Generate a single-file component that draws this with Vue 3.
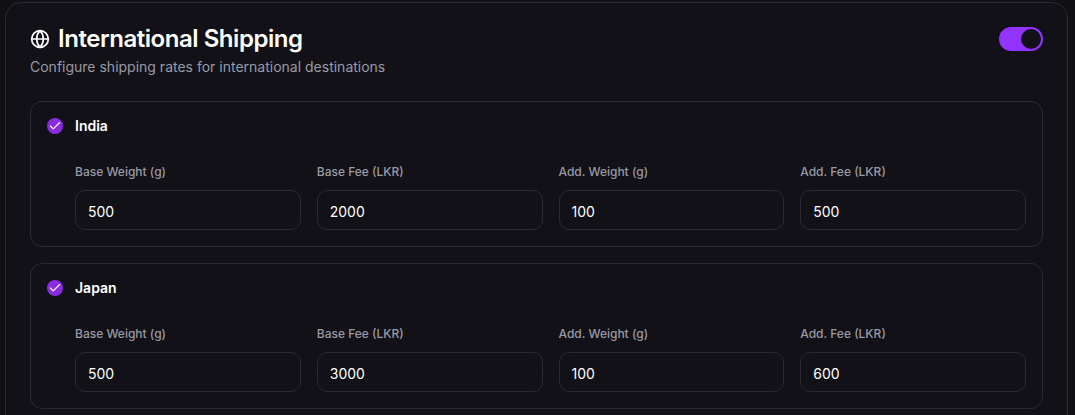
<script setup>
const fieldLabels = ['Base Weight (g)', 'Base Fee (LKR)', 'Add. Weight (g)', 'Add. Fee (LKR)']
const countries = [
  { name: 'India', values: ['500', '2000', '100', '500'] },
  { name: 'Japan', values: ['500', '3000', '100', '600'] },
]
</script>

<template>
  <div class="page">
    <section class="card">
      <header class="head">
        <div>
          <div class="title-row">
            <svg class="globe" viewBox="0 0 24 24" fill="none" stroke="currentColor" stroke-width="2" stroke-linecap="round" stroke-linejoin="round">
              <circle cx="12" cy="12" r="10" />
              <path d="M12 2a14.5 14.5 0 0 0 0 20 14.5 14.5 0 0 0 0-20" />
              <path d="M2 12h20" />
            </svg>
            <h2>International Shipping</h2>
          </div>
          <p class="sub">Configure shipping rates for international destinations</p>
        </div>
        <div class="toggle"><span class="thumb"></span></div>
      </header>
      <div class="list">
        <article v-for="c in countries" :key="c.name" class="country">
          <div class="country-row">
            <span class="check">
              <svg viewBox="0 0 24 24" fill="none" stroke="currentColor" stroke-width="2" stroke-linecap="round" stroke-linejoin="round"><path d="M20 6 9 17l-5-5" /></svg>
            </span>
            <span class="name">{{ c.name }}</span>
          </div>
          <div class="fields">
            <div v-for="(l, i) in fieldLabels" :key="l" class="field">
              <span class="label">{{ l }}</span>
              <div class="input">{{ c.values[i] }}</div>
            </div>
          </div>
        </article>
      </div>
    </section>
  </div>
</template>

<style>
html, body { background: #101015; }
</style>

<style scoped>
.page {
  width: 1075px;
  height: 415px;
  overflow: hidden;
  box-sizing: border-box;
  padding: 2px 7px 0 5px;
  font-family: Inter, "Noto Sans", sans-serif;
  background: #101015;
}
.card {
  box-sizing: border-box;
  border: 1px solid #2a2a32;
  border-radius: 16px;
  padding: 24px;
  background: #111117;
}
.head {
  display: flex;
  justify-content: space-between;
  align-items: flex-start;
}
.title-row {
  display: flex;
  align-items: center;
  gap: 8px;
  height: 24px;
  color: #fff;
}
.globe { width: 20px; height: 20px; }
h2 {
  margin: 0;
  font-size: 24px;
  line-height: 26px;
  font-weight: 600;
  letter-spacing: -0.46px;
  color: #fff;
}
.sub {
  margin: 6px 0 0;
  font-size: 14px;
  line-height: 20px;
  color: #9a9aa6;
}
.toggle {
  box-sizing: border-box;
  width: 44px;
  height: 24px;
  border-radius: 12px;
  background: #9333ff;
  display: flex;
  justify-content: flex-end;
  align-items: center;
  padding: 2px;
}
.thumb {
  width: 20px;
  height: 20px;
  border-radius: 50%;
  background: #111117;
}
.list {
  margin-top: 24px;
  display: flex;
  flex-direction: column;
  gap: 16px;
}
.country {
  box-sizing: border-box;
  border: 1px solid #2a2a32;
  border-radius: 12px;
  padding: 16px;
}
.country-row {
  display: flex;
  align-items: center;
  gap: 12px;
  height: 16px;
}
.check {
  width: 16px;
  height: 16px;
  border-radius: 50%;
  background: #8a2be2;
  color: #fff;
  display: flex;
  align-items: center;
  justify-content: center;
}
.check svg { width: 14px; height: 14px; }
.name {
  font-size: 14px;
  line-height: 14px;
  font-weight: 600;
  color: #fff;
}
.fields {
  margin-top: 30px;
  padding-left: 28px;
  display: grid;
  grid-template-columns: repeat(4, 1fr);
  gap: 16px;
}
.field {
  display: flex;
  flex-direction: column;
  gap: 10px;
}
.label {
  font-size: 12px;
  line-height: 16px;
  font-weight: 500;
  color: #9a9aa6;
}
.input {
  box-sizing: border-box;
  height: 40px;
  border: 1px solid #2a2a32;
  border-radius: 10px;
  padding: 2px 12px 0;
  display: flex;
  align-items: center;
  font-size: 14px;
  font-weight: 400;
  color: #fff;
}
</style>
